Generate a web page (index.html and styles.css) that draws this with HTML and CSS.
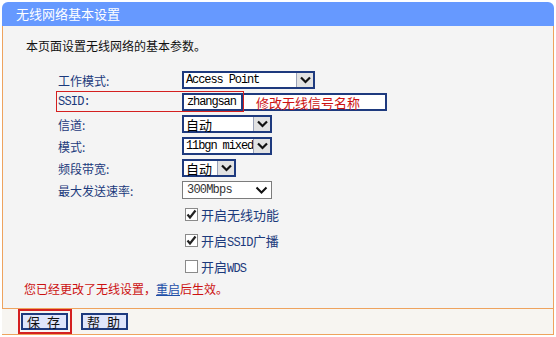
FILE: index.html
```html
<!DOCTYPE html>
<html lang="zh-CN">
<head>
    <meta charset="UTF-8">
    <title>无线网络基本设置</title>
    <link rel="stylesheet" href="styles.css">
</head>
<body>
    <div class="panel">
        <div class="panel-head">无线网络基本设置</div>

        <div class="panel-body">
            <p class="intro">本页面设置无线网络的基本参数。</p>

            <!-- 设置项 -->
            <div class="row">
                <span class="label">工作模式:</span>
                <div class="select w-mode">
                    <span class="val mono">Access Point</span>
                    <span class="arrow"><svg width="13" height="10" viewBox="0 0 13 10"><path d="M2 2.5 L6.5 7 L11 2.5" fill="none" stroke="#111" stroke-width="2.2"/></svg></span>
                </div>
            </div>

            <div class="row">
                <span class="label mono-label">SSID:</span>
                <div class="ssid-field">
                    <span class="ssid-val mono">zhangsan</span>
                    <span class="note">修改无线信号名称</span>
                </div>
                <div class="mark-box"></div>
            </div>

            <div class="row">
                <span class="label">信道:</span>
                <div class="select w-mid">
                    <span class="val cn">自动</span>
                    <span class="arrow"><svg width="13" height="10" viewBox="0 0 13 10"><path d="M2 2.5 L6.5 7 L11 2.5" fill="none" stroke="#111" stroke-width="2.2"/></svg></span>
                </div>
            </div>

            <div class="row">
                <span class="label">模式:</span>
                <div class="select w-mid">
                    <span class="val mono">11bgn mixed</span>
                    <span class="arrow"><svg width="13" height="10" viewBox="0 0 13 10"><path d="M2 2.5 L6.5 7 L11 2.5" fill="none" stroke="#111" stroke-width="2.2"/></svg></span>
                </div>
            </div>

            <div class="row">
                <span class="label">频段带宽:</span>
                <div class="select w-small">
                    <span class="val cn">自动</span>
                    <span class="arrow"><svg width="13" height="10" viewBox="0 0 13 10"><path d="M2 2.5 L6.5 7 L11 2.5" fill="none" stroke="#111" stroke-width="2.2"/></svg></span>
                </div>
            </div>

            <div class="row">
                <span class="label">最大发送速率:</span>
                <div class="select flat w-mid">
                    <span class="val mono light">300Mbps</span>
                    <span class="chev"><svg width="13" height="10" viewBox="0 0 13 10"><path d="M1.5 2.5 L6.5 7.5 L11.5 2.5" fill="none" stroke="#111" stroke-width="2"/></svg></span>
                </div>
            </div>

            <div class="row check-row">
                <span class="checkbox"><svg width="11" height="11" viewBox="0 0 11 11"><path d="M1.5 5.5 L4 8.5 L9.5 1.5" fill="none" stroke="#222" stroke-width="2.2"/></svg></span>
                <span class="check-text">开启无线功能</span>
            </div>

            <div class="row check-row">
                <span class="checkbox"><svg width="11" height="11" viewBox="0 0 11 11"><path d="M1.5 5.5 L4 8.5 L9.5 1.5" fill="none" stroke="#222" stroke-width="2.2"/></svg></span>
                <span class="check-text">开启<span class="mono-in">SSID</span>广播</span>
            </div>

            <div class="row check-row">
                <span class="checkbox"></span>
                <span class="check-text">开启<span class="mono-in">WDS</span></span>
            </div>

            <p class="msg">您已经更改了无线设置，<a class="msg-link">重启</a>后生效。</p>
        </div>

        <div class="panel-foot">
            <span class="btn-mark"><button class="btn">保&nbsp;存</button></span>
            <button class="btn btn-help">帮&nbsp;助</button>
        </div>
    </div>
</body>
</html>
```

FILE: styles.css
```css
body {
    margin: 0;
    padding: 0;
    background: #ffffff;
    font-family: "Noto Sans CJK SC", "DejaVu Sans", sans-serif;
    font-size: 12px;
}

.panel {
    margin: 2px 0 0 2px;
    width: 552px;
}

.panel-head {
    height: 24px;
    line-height: 24px;
    padding-left: 14px;
    background: #6699ff;
    border-radius: 6px 6px 0 0;
    color: #ffffff;
    font-size: 13px;
}

.panel-body {
    border-left: 1px solid #eea35e;
    border-right: 1px solid #eea35e;
    background: #f4f4f4;
    padding: 10px 0 9px 0;
}

.intro {
    margin: 0 0 13px 0;
    padding-left: 23px;
    line-height: 20px;
    color: #111111;
}

.row {
    position: relative;
    display: flex;
    align-items: center;
    height: 22px;
    padding-left: 55px;
}

.label {
    width: 124px;
    color: #1c3a7c;
}

.mono-label {
    font-family: "Liberation Mono", monospace;
    font-size: 12px;
    letter-spacing: -0.8px;
}

.mono {
    font-family: "Liberation Mono", "DejaVu Sans Mono", monospace;
    font-size: 12px;
    letter-spacing: -1.1px;
}

.mono.light {
    letter-spacing: -0.8px;
}

.cn {
    font-size: 13px;
}

.select {
    display: flex;
    align-items: stretch;
    height: 18px;
    box-sizing: border-box;
    border: 2px solid #1e3a7e;
    background: #ffffff;
}

.w-mode { width: 133px; }
.w-mid { width: 90px; }
.w-small { width: 54px; }

.select .val {
    flex: 1;
    display: flex;
    align-items: center;
    padding-left: 2px;
    color: #000000;
    white-space: nowrap;
}

.select .arrow {
    width: 16px;
    display: flex;
    align-items: center;
    justify-content: center;
    background: #e2e2e2;
    border-left: 1px solid #9aa2b8;
}

.select.flat {
    border: 1px solid #7c7c7c;
}

.select.flat .val {
    padding-left: 4px;
    color: #333333;
}

.chev {
    display: flex;
    align-items: center;
    padding-right: 3px;
}

.ssid-field {
    display: flex;
    width: 205px;
    height: 18px;
    box-sizing: border-box;
    border: 2px solid #1e3a7e;
    background: #ffffff;
}

.ssid-val {
    width: 59px;
    display: flex;
    align-items: center;
    padding-left: 3px;
    box-sizing: border-box;
    border-right: 2px solid #1e3a7e;
    color: #000000;
}

.note {
    display: flex;
    align-items: center;
    padding-left: 13px;
    color: #cc1111;
    font-size: 13px;
}

/* 红框标注 */
.mark-box {
    position: absolute;
    left: 53px;
    top: 0;
    width: 188px;
    height: 21px;
    box-sizing: border-box;
    border: 1px solid #d42020;
}

.check-row {
    height: 26px;
    padding-left: 182px;
}

.checkbox {
    display: flex;
    align-items: center;
    justify-content: center;
    width: 13px;
    height: 13px;
    box-sizing: border-box;
    border: 1px solid #8a8a8a;
    background: #ffffff;
    margin-right: 3px;
}

.check-text {
    color: #1c3a7c;
    font-size: 13px;
}

.mono-in {
    font-family: "Liberation Mono", monospace;
    font-size: 12px;
    letter-spacing: -0.8px;
}

.msg {
    margin: 0;
    padding-left: 21px;
    line-height: 20px;
    color: #cc1111;
}

.msg-link {
    color: #1d4fa8;
    text-decoration: underline;
}

.panel-foot {
    display: flex;
    align-items: flex-start;
    height: 25px;
    padding-left: 16px;
    border: 1px solid #eea35e;
    border-width: 1px 1px 1px 0;
    background: #f7f5f1;
}

.btn-mark {
    display: flex;
    border: 2px solid #d42020;
    padding: 2px 2px 2px 1px;
}

.btn {
    width: 47px;
    height: 17px;
    padding: 0;
    box-sizing: border-box;
    border: 2px solid #1e3a7e;
    background: #dfe5fb;
    color: #111111;
    font-family: "Noto Sans CJK SC", sans-serif;
    font-size: 13px;
    line-height: 13px;
    letter-spacing: 2px;
}

.btn-help {
    margin: 4px 0 0 9px;
}
```
